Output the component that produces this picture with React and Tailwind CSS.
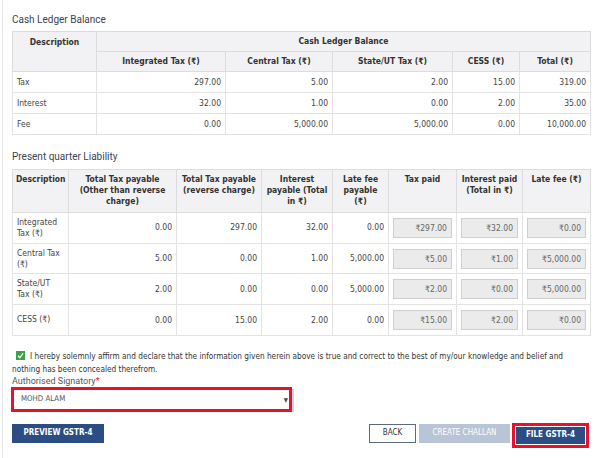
import React from 'react';

const ledgerRows = [
  ['Tax', '297.00', '5.00', '2.00', '15.00', '319.00'],
  ['Interest', '32.00', '1.00', '0.00', '2.00', '35.00'],
  ['Fee', '0.00', '5,000.00', '5,000.00', '0.00', '10,000.00'],
];

const liabilityRows = [
  ['Integrated Tax (₹)', '0.00', '297.00', '32.00', '0.00', '₹297.00', '₹32.00', '₹0.00'],
  ['Central Tax (₹)', '5.00', '0.00', '1.00', '5,000.00', '₹5.00', '₹1.00', '₹5,000.00'],
  ['State/UT Tax (₹)', '2.00', '0.00', '0.00', '5,000.00', '₹2.00', '₹0.00', '₹5,000.00'],
  ['CESS (₹)', '0.00', '15.00', '2.00', '0.00', '₹15.00', '₹2.00', '₹0.00'],
];

const tableFont = { fontFamily: '"DejaVu Sans Condensed", "DejaVu Sans", sans-serif' };
const labelFont = { fontFamily: 'Roboto, "Liberation Sans", Arial, sans-serif' };

function PaidBox({ value }) {
  return (
    <div className="h-[20px] w-full border border-[#cfcfcf] bg-[#ebebeb] px-[4px] text-right leading-[18px] text-[#666]">
      {value}
    </div>
  );
}

export default function App() {
  return (
    <div className="min-h-[458px] w-[594px] bg-white text-[#333]" style={tableFont}>
      <div className="ml-[2px] min-h-[458px] border-l border-[#e6e6e6] pl-[9px] pr-[4px] pt-[14px]">
        {/* Cash ledger */}
        <div className="h-[12px] text-[10px] leading-[12px] text-[#3b4350]" style={labelFont}>
          Cash Ledger Balance
        </div>
        <table className="mt-[5px] w-[578px] table-fixed border-collapse text-[8.5px] text-[#444]">
          <colgroup>
            <col className="w-[84px]" />
            <col className="w-[129px]" />
            <col className="w-[107px]" />
            <col className="w-[120px]" />
            <col className="w-[67px]" />
            <col className="w-[71px]" />
          </colgroup>
          <thead className="bg-[#f2f2f4] font-bold text-[#333]">
            <tr className="h-[20px]">
              <th rowSpan={2} className="border border-[#dcdcdc] align-top pt-[4px] text-center">Description</th>
              <th colSpan={5} className="border border-[#dcdcdc] px-[4px] text-center">Cash Ledger Balance</th>
            </tr>
            <tr className="h-[20px]">
              <th className="border border-[#dcdcdc] text-center">Integrated Tax (₹)</th>
              <th className="border border-[#dcdcdc] text-center">Central Tax (₹)</th>
              <th className="border border-[#dcdcdc] text-center">State/UT Tax (₹)</th>
              <th className="border border-[#dcdcdc] text-center">CESS (₹)</th>
              <th className="border border-[#dcdcdc] text-center">Total (₹)</th>
            </tr>
          </thead>
          <tbody>
            {ledgerRows.map((r) => (
              <tr key={r[0]} className="h-[21px]">
                {r.map((c, i) => (
                  <td key={i} className={`border border-[#e3e3e3] px-[4px] ${i === 0 ? 'text-left' : 'text-right'}`}>{c}</td>
                ))}
              </tr>
            ))}
          </tbody>
        </table>

        {/* Liability */}
        <div className="mt-[16px] h-[12px] text-[10px] leading-[12px] text-[#3b4350]" style={labelFont}>
          Present quarter Liability
        </div>
        <table className="mt-[6px] w-[578px] table-fixed border-collapse text-[8.5px] text-[#444]">
          <colgroup>
            <col className="w-[56px]" />
            <col className="w-[108px]" />
            <col className="w-[85px]" />
            <col className="w-[71px]" />
            <col className="w-[56px]" />
            <col className="w-[68px]" />
            <col className="w-[66px]" />
            <col className="w-[68px]" />
          </colgroup>
          <thead className="bg-[#f2f2f4] font-bold leading-[11px] text-[#333]">
            <tr className="h-[43px]">
              <th className="border border-[#dcdcdc] px-[3px] pt-[4px] align-top text-left">Description</th>
              <th className="border border-[#dcdcdc] px-[8px] pt-[4px] align-top text-center">Total Tax payable (Other than reverse charge)</th>
              <th className="border border-[#dcdcdc] px-[3px] pt-[4px] align-top text-center">Total Tax payable (reverse charge)</th>
              <th className="border border-[#dcdcdc] px-[4px] pt-[4px] align-top text-center">Interest payable (Total in ₹)</th>
              <th className="border border-[#dcdcdc] px-[6px] pt-[4px] align-top text-center">Late fee payable (₹)</th>
              <th className="border border-[#dcdcdc] px-[3px] pt-[4px] align-top text-center">Tax paid</th>
              <th className="border border-[#dcdcdc] px-[3px] pt-[4px] align-top text-center">Interest paid (Total in ₹)</th>
              <th className="border border-[#dcdcdc] px-[3px] pt-[4px] align-top text-center">Late fee (₹)</th>
            </tr>
          </thead>
          <tbody>
            {liabilityRows.map((r) => (
              <tr key={r[0]} className="h-[30.7px]">
                <td className="border border-[#e3e3e3] px-[4px] text-left leading-[11px]">{r[0]}</td>
                {r.slice(1, 5).map((c, i) => (
                  <td key={i} className="border border-[#e3e3e3] px-[4px] text-right">{c}</td>
                ))}
                {r.slice(5).map((c, i) => (
                  <td key={'p' + i} className="border border-[#e3e3e3] px-[4px]">
                    <PaidBox value={c} />
                  </td>
                ))}
              </tr>
            ))}
          </tbody>
        </table>

        {/* Declaration */}
        <div className="mt-[14px] text-[8.2px] leading-[13px] text-[#333]">
          <span className="mr-[5px] ml-[4px] inline-block h-[9px] w-[9px] bg-[#3aa34a] align-[-1px]">
            <svg viewBox="0 0 10 10" className="block h-[9px] w-[9px]">
              <path d="M2.3 5.2 L4.3 7.4 L7.8 2.6" fill="none" stroke="#fff" strokeWidth="1.5" />
            </svg>
          </span>
          I hereby solemnly affirm and declare that the information given herein above is true and correct to the best of my/our knowledge and belief and nothing has been concealed therefrom.
        </div>
        <div className="h-[10px] text-[9px] leading-[10px] text-[#555]" style={labelFont}>
          Authorised Signatory<span className="text-[#e31b23]">*</span>
        </div>
        <div className="relative -ml-[1px] mt-[1px] h-[25px] w-[281px] border-[3px] border-[#e8112d]">
          <div className="flex h-full items-center justify-between bg-white pl-[7px] pr-[1px] text-[7.8px] text-[#555]">
            <span>MOHD ALAM</span>
            <span className="text-[6px] text-[#444]">▼</span>
          </div>
          <div className="absolute -right-[5px] top-[-1px] h-[23px] w-[2px] bg-[#bcd4ee]" />
        </div>

        {/* Buttons */}
        <div className="mt-[12px] flex items-start justify-between pr-[1px]">
          <button className="h-[19px] w-[92px] bg-[#2b4d84] text-[8px] font-bold text-white">PREVIEW GSTR-4</button>
          <div className="flex items-start">
            <button className="h-[19px] w-[47px] border border-[#5b6b7c] bg-white text-[8px] text-[#333]">BACK</button>
            <button className="ml-[3px] h-[19px] w-[91px] bg-[#b9c4d6] text-[8px] text-white">CREATE CHALLAN</button>
            <div className="-mt-[1px] ml-[2px] border-[3px] border-[#e8112d] p-[1px]">
              <button className="block h-[17px] w-[69px] bg-[#2b4d84] text-[8px] font-bold text-white">FILE GSTR-4</button>
            </div>
          </div>
        </div>
      </div>
    </div>
  );
}
